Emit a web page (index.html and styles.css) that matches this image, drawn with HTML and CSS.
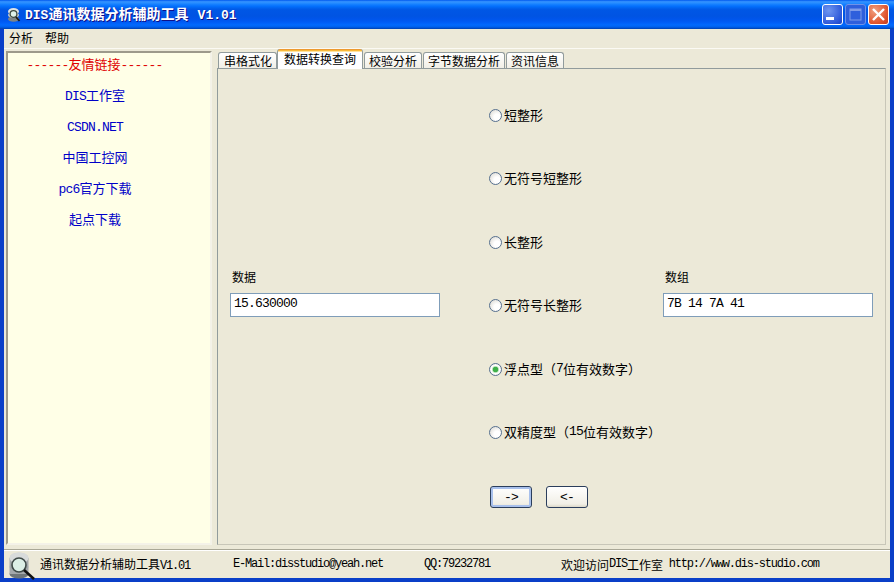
FILE: index.html
```html
<!DOCTYPE html>
<html lang="zh">
<head>
<meta charset="utf-8">
<title>DIS通讯数据分析辅助工具 V1.01</title>
<link rel="stylesheet" href="styles.css">
</head>
<body>
<div class="window">
  <header class="titlebar">
    <svg class="app-icon" width="16" height="16" viewBox="0 0 16 16">
      <ellipse cx="7.500" cy="12" rx="5.500" ry="2.800" fill="#7d8486"/>
      <ellipse cx="7.500" cy="8" rx="5.500" ry="3" fill="#c5cacb"/>
      <ellipse cx="7.500" cy="4.500" rx="5.500" ry="3.500" fill="#dfe3e3"/>
      <circle cx="7.500" cy="7" r="3.400" fill="#dff2ea" stroke="#3c4a40" stroke-width="1.300"/>
      <path d="M10 10l3.500 4" stroke="#1a1a1a" stroke-width="1.800"/>
    </svg>
    <h1 class="title"><span class="mono-b">DIS</span>通讯数据分析辅助工具 <span class="mono-b">V1.01</span></h1>
    <div class="winbtns">
      <div class="wb wb-min"><svg width="21" height="21" viewBox="0 0 21 21"><rect x="4" y="13" width="8" height="3" fill="#fff"/></svg></div>
      <div class="wb wb-max"><svg width="21" height="21" viewBox="0 0 21 21"><rect x="5" y="5" width="11" height="11" fill="none" stroke="#7f9be8" stroke-width="1"/><rect x="5" y="5" width="11" height="2" fill="#7f9be8"/></svg></div>
      <div class="wb wb-close"><svg width="21" height="21" viewBox="0 0 21 21"><path d="M5 5l11 11M16 5L5 16" stroke="#fff" stroke-width="2.400"/></svg></div>
    </div>
  </header>
  <div class="inner">
    <nav class="menubar"><span>分析</span><span>帮助</span></nav>
    <main class="content">
      <aside class="links">
        <div class="link head"><span class="mono">------</span>友情链接<span class="mono">------</span></div>
        <div class="link"><span class="mono">DIS</span>工作室</div>
        <div class="link"><span class="mono">CSDN.NET</span></div>
        <div class="link">中国工控网</div>
        <div class="link"><span class="mono">pc6</span>官方下载</div>
        <div class="link">起点下载</div>
      </aside>
      <section class="tabs">
        <div class="tabstrip">
          <div class="tab t1">串格式化</div>
          <div class="tab active">数据转换查询</div>
          <div class="tab">校验分析</div>
          <div class="tab">字节数据分析</div>
          <div class="tab">资讯信息</div>
        </div>
        <div class="panel">
          <div class="field">
            <label class="flabel">数据</label>
            <div class="input"><span class="mono">15.630000</span></div>
          </div>
          <div class="center">
            <div class="radio"><i class="dot"></i>短整形</div>
            <div class="radio"><i class="dot"></i>无符号短整形</div>
            <div class="radio"><i class="dot"></i>长整形</div>
            <div class="radio"><i class="dot"></i>无符号长整形</div>
            <div class="radio"><i class="dot on"></i>浮点型（<span class="mono">7</span>位有效数字）</div>
            <div class="radio"><i class="dot"></i>双精度型（<span class="mono">15</span>位有效数字）</div>
            <div class="btns">
              <div class="btn default"><span class="mono">-&gt;</span></div>
              <div class="btn"><span class="mono">&lt;-</span></div>
            </div>
          </div>
          <div class="field right">
            <label class="flabel">数组</label>
            <div class="input"><span class="mono">7B 14 7A 41</span></div>
          </div>
        </div>
      </section>
    </main>
    <footer class="status">
      <div class="s s1">
        <svg class="st-icon" width="28" height="28" viewBox="0 0 28 28">
          <ellipse cx="10" cy="22" rx="9.500" ry="4.500" fill="#6f7678"/>
          <ellipse cx="10" cy="15" rx="9.500" ry="5" fill="#b9bebf"/>
          <ellipse cx="10" cy="6" rx="9.500" ry="5.500" fill="#cfd3d3"/>
          <rect x="0.500" y="6" width="19" height="16" fill="#a4a9ab"/>
          <ellipse cx="10" cy="6" rx="9.500" ry="5.500" fill="#d8dbdb"/>
          <circle cx="10" cy="13" r="7" fill="#dcefe6" stroke="#3f4a48" stroke-width="1.600"/>
          <path d="M15 18l10 9" stroke="#111" stroke-width="2.600"/>
        </svg>
        <span>通讯数据分析辅助工具<span class="ms">V1.01</span></span>
      </div>
      <div class="s s2"><span class="ms">E-Mail:disstudio@yeah.net</span></div>
      <div class="s s3"><span class="ms">QQ:79232781</span></div>
      <div class="s s4">欢迎访问<span class="ms">DIS</span>工作室 <span class="ms url">http://www.dis-studio.com</span></div>
    </footer>
  </div>
</div>
</body>
</html>
```
FILE: styles.css
```css
* { box-sizing: border-box; }
html, body { margin: 0; padding: 0; width: 894px; height: 582px; overflow: hidden; }
body {
  font-family: "Noto Sans CJK SC", "Liberation Sans", sans-serif;
  font-size: 13px;
  color: #000;
  background: #0a3fc8;
}
.mono { font-family: "Liberation Mono", monospace; font-size: 13px; letter-spacing: -0.8px; }
.ms { font-family: "Liberation Mono", monospace; font-size: 12px; letter-spacing: -1.2px; }
.mono-b { font-family: "Liberation Mono", monospace; font-size: 13px; font-weight: bold; letter-spacing: 0; }
.window { width: 894px; height: 582px; display: flex; flex-direction: column; }
.titlebar {
  height: 29px;
  flex: none;
  display: flex;
  align-items: center;
  padding: 0 5px 0 6px;
  background: linear-gradient(to bottom, #0058ee 0%, #3593ff 6%, #288eff 10%, #127dff 16%, #036ffc 22%, #0262ee 28%, #0057e5 34%, #0054e3 56%, #0055eb 66%, #005bf5 76%, #026afe 86%, #0062ef 92%, #0052d6 96%, #0040ab 100%);
}
.app-icon { flex: none; }
.title {
  margin: 0 0 0 3px;
  font-size: 14px;
  font-weight: bold;
  line-height: 16px;
  color: #fff;
  white-space: pre;
  word-spacing: 6px;
  text-shadow: 1px 1px 0 #0f1089;
}
.winbtns { margin-left: auto; display: flex; gap: 2px; }
.wb { width: 21px; height: 21px; border: 1px solid #fff; border-radius: 3px; overflow: hidden; }
.wb svg { display: block; margin: -1px; }
.wb-min { background: radial-gradient(circle at 30% 30%, #6f96f0, #2a55d8 75%, #1c43c0); }
.wb-max { background: #2f5fdc; border-color: #6f92e8; }
.wb-close { background: radial-gradient(circle at 30% 30%, #f0a080, #e0562f 65%, #c03a1c); }
.inner {
  flex: 1;
  min-height: 0;
  margin: 0 4px 4px;
  background: #ece9d8;
  display: flex;
  flex-direction: column;
}
.menubar {
  height: 20px;
  flex: none;
  display: flex;
  align-items: flex-start;
  gap: 12px;
  padding: 0 0 0 5px;
  font-size: 12px;
  line-height: 18px;
  border-bottom: 1px solid #fbfaf4;
}
.menubar span { display: block; }
.content { height: 500px; flex: none; display: flex; padding: 2px 4px 0 2px; gap: 5px; }
.links {
  width: 206px;
  height: 494px;
  flex: none;
  background: #ffffe7;
  border: 2px solid;
  border-color: #9d9a8b #f4f2e8 #f4f2e8 #9d9a8b;
  display: flex;
  flex-direction: column;
  padding: 1px 28px 0 0;
}
.link { height: 31px; line-height: 20px; text-align: center; color: #0000c8; font-size: 13px; white-space: pre; }
.link.head { color: #e00000; padding-right: 1px; }
.tabs { flex: 1; height: 494px; display: flex; flex-direction: column; min-width: 0; }
.tabstrip { height: 17px; flex: none; display: flex; align-items: flex-end; padding-left: 1px; position: relative; z-index: 1; gap: 1px; }
.tab {
  height: 16px;
  padding: 0 4px;
  font-size: 12px;
  line-height: 16px;
  background: linear-gradient(to bottom, #fff, #f1efe6);
  border: 1px solid #919b9c;
  border-bottom: none;
  border-radius: 3px 3px 0 0;
  white-space: nowrap;
}
.tab.t1 { padding: 0 5px; width: 59px; }
.tab.active {
  height: 20px;
  margin: 0 0 -1px -1px;
  padding: 1px 6px 0;
  line-height: 18px;
  background: linear-gradient(to bottom, #e68b2c 0, #ffc73c 2px, #fff 3px, #fff 100%);
  border-top: none;
}
.panel {
  flex: 1;
  min-height: 0;
  border: 1px solid #919b9c;
  border-color: #919b9c #c8c6b8 #c8c6b8 #919b9c;
  background: #ece9d8;
  display: grid;
  grid-template-columns: 259px 174px 210px;
  padding-left: 12px;
  align-items: start;
}
.field { display: flex; flex-direction: column; padding-top: 198px; }
.field.right { grid-column: 3; }
.flabel { font-size: 12px; line-height: 20px; padding-left: 2px; height: 26px; }
.input {
  width: 210px;
  height: 24px;
  background: #fff;
  border: 1px solid #7f9db9;
  padding-left: 3px;
  line-height: 16px;
}
.center { display: flex; flex-direction: column; padding-top: 37px; }
.radio { height: 63.4px; display: flex; align-items: flex-start; line-height: 18px; white-space: pre; }
.radio .dot { margin-right: 2px; margin-top: 3px; }
.dot {
  display: block;
  flex: none;
  width: 13px;
  height: 13px;
  border-radius: 50%;
  border: 1px solid #56708f;
  background: radial-gradient(circle at 65% 65%, #fff 30%, #d6d4cc 100%);
}
.dot.on { background: radial-gradient(circle, #3fb04a 0 2.5px, #b8e0b8 3px, #fff 4px, #e8e6dc 100%); }
.btns { display: flex; gap: 14px; margin-left: 1px; }
.btn {
  width: 42px;
  height: 22px;
  border: 1px solid #2b3e5c;
  border-radius: 3px;
  background: linear-gradient(to bottom, #fff, #f1efe6 85%, #dcd8c8);
  display: flex;
  align-items: center;
  justify-content: center;
}
.btn.default { box-shadow: inset 0 0 0 2px #a8c0ec; }
.status {
  flex: 1;
  min-height: 0;
  display: flex;
  align-items: center;
  font-size: 12px;
  border-top: 1px solid #a9a796;
  box-shadow: inset 0 1px 0 #fff;
  white-space: pre;
}
.s { display: flex; align-items: center; height: 100%; }
.s1 { width: 229px; padding-left: 5px; gap: 3px; }
.s2 { width: 191px; }
.s3 { width: 137px; }
.s4 { flex: 1; }
.s4 .url { margin-left: 3px; }
.st-icon { flex: none; margin-top: 3px; }
```
